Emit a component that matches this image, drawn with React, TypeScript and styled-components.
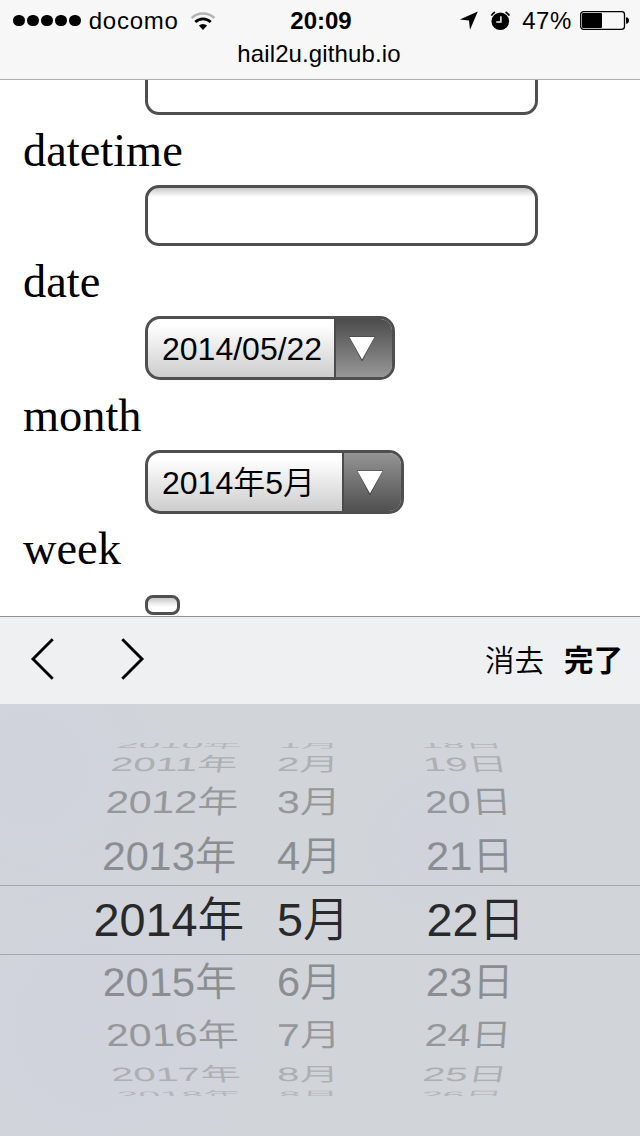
import React from "react";
import styled, { createGlobalStyle } from "styled-components";

const Global = createGlobalStyle`
  * { box-sizing: border-box; }
  body { margin: 0; background: #fff; overflow: hidden; }
`;

const sans = `"Liberation Sans", "Noto Sans CJK JP", sans-serif`;

const Screen = styled.div`
  display: flex;
  flex-direction: column;
  width: 640px;
  height: 1136px;
  overflow: hidden;
  background: #fff;
  color: #000;
  font-family: ${sans};
`;

const Header = styled.header`
  flex: none;
  height: 80px;
  background: #f7f7f7;
  border-bottom: 1px solid #b0b0b0;
`;

const StatusBar = styled.div`
  display: grid;
  grid-template-columns: 1fr auto 1fr;
  align-items: center;
  height: 41px;
  padding: 0 11px 0 13px;
  font-size: 24px;
  line-height: 28px;
`;

const StatusLeft = styled.div`
  display: flex;
  align-items: center;
`;

const StatusRight = styled.div`
  display: flex;
  align-items: center;
  justify-content: flex-end;
`;

const Dots = styled.div`
  display: flex;
  gap: 2.2px;
  margin-right: 8px;
`;

const Dot = styled.span`
  width: 11.8px;
  height: 11.8px;
  border-radius: 50%;
  background: #000;
`;

const Carrier = styled.span`
  letter-spacing: 0.75px;
`;

const Clock = styled.span`
  font-weight: bold;
`;

const Percent = styled.span`
  letter-spacing: 0.6px;
  margin: 0 8px 0 12px;
`;

const Address = styled.div`
  margin-left: -2px;
  text-align: center;
  font-size: 24px;
  line-height: 26px;
  letter-spacing: 0.12px;
`;

const WifiIcon = styled.svg`
  margin-left: 11px;
`;

const ClockIcon = styled.svg`
  margin-left: 12px;
`;

const Page = styled.main`
  flex: none;
  display: flex;
  flex-direction: column;
  height: 536px;
  overflow: hidden;
`;

const Label = styled.label<{ $h: number; $lh: number }>`
  flex: none;
  height: ${(p) => p.$h}px;
  padding-left: 23px;
  font-family: "Liberation Serif", serif;
  font-size: 46.4px;
  line-height: ${(p) => p.$lh}px;
`;

const Field = styled.div<{ $w: number; $h: number; $r?: number; $cut?: boolean }>`
  flex: none;
  width: ${(p) => p.$w}px;
  height: ${(p) => p.$h}px;
  margin-left: 145px;
  border: 3px solid #4f4f4f;
  border-top-width: ${(p) => (p.$cut ? 0 : 3)}px;
  border-radius: ${(p) => (p.$cut ? "0 0 14px 14px" : `${p.$r ?? 14}px`)};
  background: ${(p) =>
    p.$cut ? "#fff" : "linear-gradient(#c9c9c9, #fff 9px)"};
`;

const Select = styled.div<{ $w: number }>`
  flex: none;
  display: flex;
  width: ${(p) => p.$w}px;
  height: 64px;
  margin-left: 145px;
  border: 3px solid #4f4f4f;
  border-radius: 15px;
  overflow: hidden;
  background: linear-gradient(#fff 10%, #cdcdcd);
`;

const SelectText = styled.span`
  flex: 1;
  padding-left: 14px;
  font-size: 32px;
  line-height: 60px;
  font-weight: 350;
  white-space: nowrap;
`;

const SelectButton = styled.span<{ $flip?: boolean }>`
  display: flex;
  align-items: center;
  justify-content: center;
  width: ${(p) => (p.$flip ? 59 : 58)}px;
  padding: 2px 5px 0 0;
  border-left: 2px solid #4b4b4b;
  background: ${(p) =>
    p.$flip
      ? "linear-gradient(#949494, #505050)"
      : "linear-gradient(#4c4c4c, #979797)"};
`;

const Toolbar = styled.div`
  flex: none;
  display: flex;
  align-items: center;
  height: 88px;
  padding: 0 17px 0 30px;
  border-top: 1px solid #919296;
  background: #eff0f2;
  font-size: 29.5px;
`;

const Chevron = styled.svg<{ $gap: number }>`
  margin-right: ${(p) => p.$gap}px;
  margin-bottom: 4px;
`;

const Action = styled.button<{ $strong?: boolean }>`
  margin: 0 0 0 ${(p) => (p.$strong ? 20 : 0)}px;
  padding: 0;
  border: 0;
  background: none;
  color: #000;
  font: ${(p) => (p.$strong ? 700 : 350)} 29.5px/40px ${sans};
`;

const Spacer = styled.span`
  flex: 1;
`;

const Picker = styled.div`
  flex: 1;
  padding-top: 34px;
  background:
    radial-gradient(circle at 15% 75%, rgba(208, 210, 222, 0.8), transparent 200px),
    radial-gradient(circle at 68% 32%, rgba(207, 209, 222, 0.6), transparent 100px),
    radial-gradient(circle at 5% 15%, rgba(207, 210, 222, 0.7), transparent 170px),
    #d1d5d9;
`;

const WheelRow = styled.div<{ $h: number; $clip?: string; $on?: boolean; $color: string }>`
  display: grid;
  grid-template-columns: 184px 149px 1fr;
  align-items: center;
  height: ${(p) => p.$h}px;
  padding-left: 93px;
  color: ${(p) => p.$color};
  ${(p) => p.$clip && `clip-path: inset(${p.$clip});`}
  ${(p) => p.$on && "border-top: 1px solid #a5a8ac; border-bottom: 1px solid #a5a8ac;"}
`;

const WheelCell = styled.div<{ $x: number; $sx: number; $sy: number; $skew: number }>`
  height: 0;
  font-size: 47px;
  line-height: 0;
  font-weight: 350;
  white-space: nowrap;
  transform-origin: 0 50%;
  transform: translate(${(p) => p.$x}px, -0.5px) skewX(${(p) => p.$skew}deg)
    scale(${(p) => p.$sx}, ${(p) => p.$sy});
`;

type RowData = {
  cells: [string, string, string];
  x: [number, number, number];
  skew: [number, number, number];
  h: number;
  sx: number;
  sy: number;
  color: string;
  clip?: string;
  on?: boolean;
};

const rows: RowData[] = [
  { cells: ["2010年", "1月", "18日"], x: [24, 2, -5], skew: [-20, -5, 15], h: 14, sx: 0.825, sy: 0.2, color: "#b4b7bb", clip: "5px 0 0 0" },
  { cells: ["2011年", "2月", "19日"], x: [18, 0, -3], skew: [-8, -2, 10], h: 25, sx: 0.855, sy: 0.41, color: "#acafb3" },
  { cells: ["2012年", "3月", "20日"], x: [13, 0, -1], skew: [-4, -1, 4], h: 52, sx: 0.875, sy: 0.67, color: "#95989b" },
  { cells: ["2013年", "4月", "21日"], x: [9.5, 0, 0], skew: [-2, 0, 1], h: 56, sx: 0.885, sy: 0.85, color: "#8b8e91" },
  { cells: ["2014年", "5月", "22日"], x: [0.5, 0, 0.5], skew: [0, 0, 0], h: 70, sx: 0.995, sy: 1, color: "#28292b", on: true },
  { cells: ["2015年", "6月", "23日"], x: [9.5, 0, 0], skew: [2, 0, -1], h: 55, sx: 0.885, sy: 0.85, color: "#8b8e91" },
  { cells: ["2016年", "7月", "24日"], x: [13, 0, -1], skew: [4, 1, -4], h: 52, sx: 0.875, sy: 0.67, color: "#95989b" },
  { cells: ["2017年", "8月", "25日"], x: [18, 0, -3], skew: [8, 2, -10], h: 26, sx: 0.855, sy: 0.41, color: "#acafb3" },
  { cells: ["2018年", "8月", "26日"], x: [24, 2, -5], skew: [20, 5, -15], h: 14, sx: 0.825, sy: 0.2, color: "#b4b7bb", clip: "0 0 6px 0" },
];

function Triangle() {
  return (
    <svg width="28" height="28" viewBox="0 0 28 28">
      <path d="M1 1.5H27L14 26.5Z" fill="#3c3c3c" />
      <path d="M1.5 2H26.5L14 24.5Z" fill="#fff" />
    </svg>
  );
}

export default function App() {
  return (
    <Screen>
      <Global />
      <Header>
        <StatusBar>
          <StatusLeft>
            <Dots>
              {[0, 1, 2, 3, 4].map((i) => (
                <Dot key={i} />
              ))}
            </Dots>
            <Carrier>docomo</Carrier>
            <WifiIcon width="26" height="20" viewBox="0 0 26 20" fill="none">
              <path d="M1.6 7.1A16.5 16.5 0 0 1 24.4 7.1" stroke="#b3b3b3" strokeWidth="2.6" />
              <path d="M5.3 11A11 11 0 0 1 20.7 11" stroke="#000" strokeWidth="2.8" />
              <path d="M8.9 14.6A6 6 0 0 1 17.1 14.6L13 19Z" fill="#000" />
            </WifiIcon>
          </StatusLeft>
          <Clock>20:09</Clock>
          <StatusRight>
            <svg width="19" height="19" viewBox="0 0 19 19">
              <path d="M18.8 .6L11 18.8L10 9.6L.8 8.6Z" fill="#000" />
            </svg>
            <ClockIcon width="20" height="20" viewBox="0 0 20 20" fill="none">
              <circle cx="10.3" cy="10.3" r="8.8" fill="#000" />
              <path d="M1.3 4.6A10.5 10.5 0 0 1 5 1.1M15.6 1.1A10.5 10.5 0 0 1 19.3 4.6" stroke="#000" strokeWidth="1.7" />
              <path d="M10.9 5.3V11.1H6.3" stroke="#f7f7f7" strokeWidth="1.5" />
            </ClockIcon>
            <Percent>47%</Percent>
            <svg width="49" height="19" viewBox="0 0 49 19">
              <rect x=".7" y=".7" width="43.8" height="17.6" rx="2.8" fill="none" stroke="#000" strokeWidth="1.3" />
              <rect x="2" y="2" width="20" height="15" rx="1" fill="#000" />
              <path d="M46 6.2Q49 6.6 49 9.5Q49 12.4 46 12.8Z" fill="#000" />
            </svg>
          </StatusRight>
        </StatusBar>
        <Address>hail2u.github.io</Address>
      </Header>

      <Page>
        <Field $w={393} $h={35} $cut />
        <Label $h={70} $lh={71}>datetime</Label>
        <Field $w={393} $h={61} />
        <Label $h={70} $lh={71}>date</Label>
        <Select $w={250}>
          <SelectText>2014/05/22</SelectText>
          <SelectButton>
            <Triangle />
          </SelectButton>
        </Select>
        <Label $h={70} $lh={71}>month</Label>
        <Select $w={259}>
          <SelectText>2014年5月</SelectText>
          <SelectButton $flip>
            <Triangle />
          </SelectButton>
        </Select>
        <Label $h={81} $lh={70}>week</Label>
        <Field $w={35} $h={20} $r={8} />
      </Page>

      <Toolbar>
        <Chevron $gap={67} width="24" height="42" viewBox="0 0 24 42" fill="none" stroke="#000" strokeWidth="2.9">
          <path d="M22.7 1.2L3 21L22.7 40.8" />
        </Chevron>
        <Chevron $gap={0} width="24" height="42" viewBox="0 0 24 42" fill="none" stroke="#000" strokeWidth="2.9">
          <path d="M1.3 1.2L21 21L1.3 40.8" />
        </Chevron>
        <Spacer />
        <Action>消去</Action>
        <Action $strong>完了</Action>
      </Toolbar>

      <Picker>
        {rows.map((r) => (
          <WheelRow key={r.cells[0]} $h={r.h} $clip={r.clip} $on={r.on} $color={r.color}>
            {r.cells.map((text, i) => (
              <WheelCell key={i} $x={r.x[i]} $sx={r.sx} $sy={r.sy} $skew={r.skew[i]}>
                {text}
              </WheelCell>
            ))}
          </WheelRow>
        ))}
      </Picker>
    </Screen>
  );
}
